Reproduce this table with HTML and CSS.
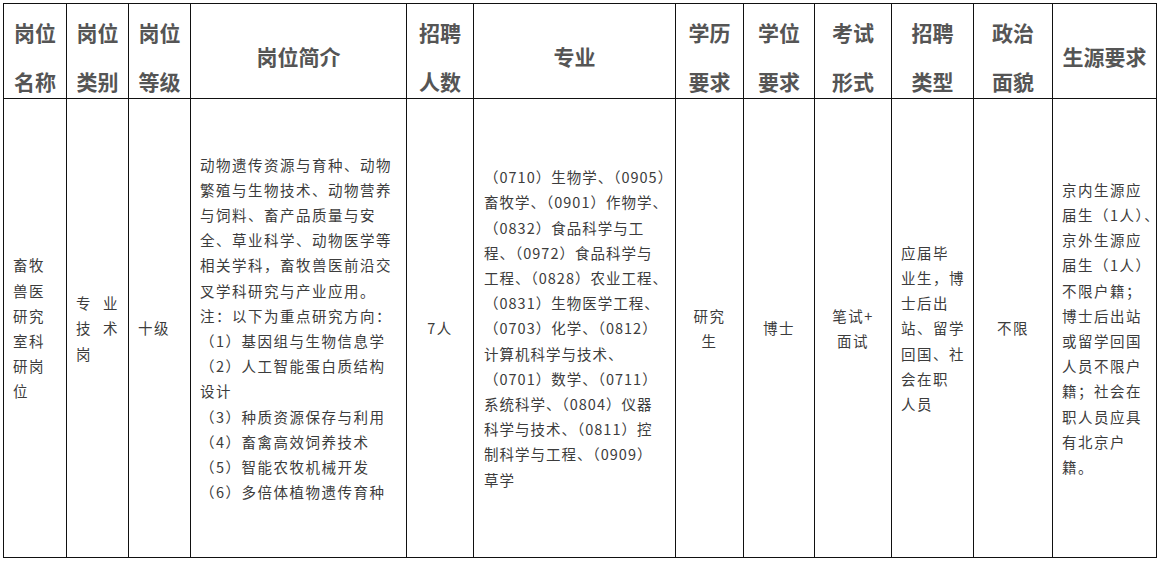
FILE: index.html
```html
<!DOCTYPE html>
<html lang="zh-CN">
<head>
<meta charset="utf-8">
<title>岗位信息</title>
<link rel="stylesheet" href="styles.css">
</head>
<body>
<table class="jobs">
  <colgroup>
    <col class="c1"><col class="c2"><col class="c3"><col class="c4"><col class="c5"><col class="c6">
    <col class="c7"><col class="c8"><col class="c9"><col class="c10"><col class="c11"><col class="c12">
  </colgroup>
  <thead>
    <tr>
      <th><div class="hd"><span>岗位</span><span>名称</span></div></th>
      <th><div class="hd"><span>岗位</span><span>类别</span></div></th>
      <th><div class="hd"><span>岗位</span><span>等级</span></div></th>
      <th><div class="hd"><span>岗位简介</span></div></th>
      <th><div class="hd"><span>招聘</span><span>人数</span></div></th>
      <th><div class="hd"><span>专业</span></div></th>
      <th><div class="hd"><span>学历</span><span>要求</span></div></th>
      <th><div class="hd"><span>学位</span><span>要求</span></div></th>
      <th><div class="hd"><span>考试</span><span>形式</span></div></th>
      <th><div class="hd"><span>招聘</span><span>类型</span></div></th>
      <th><div class="hd"><span>政治</span><span>面貌</span></div></th>
      <th><div class="hd"><span>生源要求</span></div></th>
    </tr>
  </thead>
  <tbody>
    <tr>
      <td class="left">畜牧<br>兽医<br>研究<br>室科<br>研岗<br>位</td>
      <td class="left"><div class="just"><span>专</span><span>业</span></div><div class="just"><span>技</span><span>术</span></div><div>岗</div></td>
      <td class="left">十级</td>
      <td class="left">动物遗传资源与育种、动物<br>繁殖与生物技术、动物营养<br>与饲料、畜产品质量与安<br>全、草业科学、动物医学等<br>相关学科，畜牧兽医前沿交<br>叉学科研究与产业应用。<br>注：以下为重点研究方向：<br>（1）基因组与生物信息学<br>（2）人工智能蛋白质结构<br>设计<br>（3）种质资源保存与利用<br>（4）畜禽高效饲养技术<br>（5）智能农牧机械开发<br>（6）多倍体植物遗传育种</td>
      <td class="center">7人</td>
      <td class="left major">（0710）生物学、（0905）<br>畜牧学、（0901）作物学、<br>（0832）食品科学与工<br>程、（0972）食品科学与<br>工程、（0828）农业工程、<br>（0831）生物医学工程、<br>（0703）化学、（0812）<br>计算机科学与技术、<br>（0701）数学、（0711）<br>系统科学、（0804）仪器<br>科学与技术、（0811）控<br>制科学与工程、（0909）<br>草学</td>
      <td class="center">研究<br>生</td>
      <td class="center">博士</td>
      <td class="center">笔试+<br>面试</td>
      <td class="left">应届毕<br>业生，博<br>士后出<br>站、留学<br>回国、社<br>会在职<br>人员</td>
      <td class="center">不限</td>
      <td class="left">京内生源应<br>届生（1人）、<br>京外生源应<br>届生（1人）<br>不限户籍；<br>博士后出站<br>或留学回国<br>人员不限户<br>籍；社会在<br>职人员应具<br>有北京户<br>籍。</td>
    </tr>
  </tbody>
</table>
</body>
</html>
```

FILE: styles.css
```css
html, body {
  margin: 0;
  padding: 0;
  background: #ffffff;
}

body {
  padding: 3px 0 0 3px;
  font-family: "Noto Sans CJK SC", "Noto Sans", sans-serif;
}

.jobs {
  border-collapse: collapse;
  table-layout: fixed;
  width: 1154px;
}

.c1 { width: 63px; }
.c2 { width: 62px; }
.c3 { width: 62px; }
.c4 { width: 216px; }
.c5 { width: 67px; }
.c6 { width: 202px; }
.c7 { width: 68px; }
.c8 { width: 71px; }
.c9 { width: 77px; }
.c10 { width: 82px; }
.c11 { width: 79px; }
.c12 { width: 104px; }

.jobs th,
.jobs td {
  border: 1px solid #111;
  vertical-align: middle;
}

.jobs th {
  height: 95px;
  padding: 10px 0 0;
  box-sizing: border-box;
  font-weight: 700;
  font-size: 21px;
  color: #555555;
  text-align: center;
}

.hd {
  display: flex;
  flex-direction: column;
  align-items: center;
  gap: 25px;
  line-height: 24px;
  white-space: nowrap;
}

.jobs td {
  height: 459px;
  box-sizing: border-box;
  font-size: 14.5px;
  line-height: 25.2px;
  letter-spacing: 1.5px;
  color: #3c3c3c;
  white-space: nowrap;
  font-weight: 400;
}

.jobs td.left {
  padding: 0 0 0 9px;
  text-align: left;
}

.jobs td.major {
  padding-left: 10px;
  letter-spacing: 1px;
}

.jobs td.center {
  padding: 0;
  text-align: center;
}

.just {
  display: flex;
  justify-content: space-between;
  width: 43px;
}
```
